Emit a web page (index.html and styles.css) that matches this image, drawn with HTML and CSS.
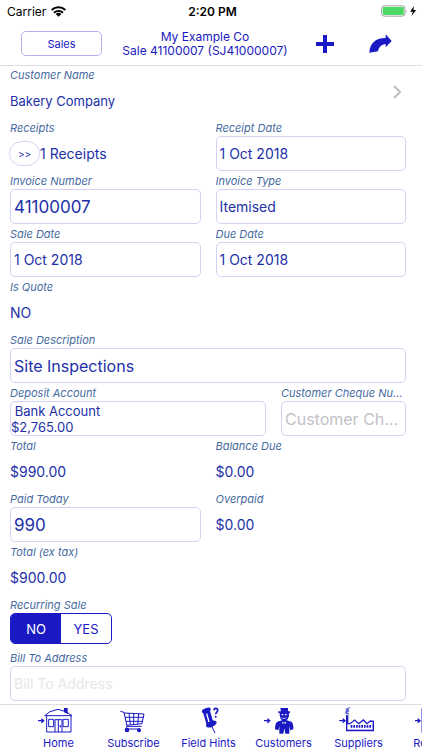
FILE: index.html
```html
<!DOCTYPE html>
<html lang="en">
<head>
<meta charset="utf-8">
<meta name="viewport" content="width=device-width, initial-scale=1">
<title>Sale 41100007</title>
<link rel="stylesheet" href="styles.css">
</head>
<body>
<div class="status">
  <div class="status-left">
    <span>Carrier</span>
    <svg class="wifi" viewBox="0 0 45 33" aria-hidden="true">
      <path d="M2 12a30 30 0 0 1 41 0M9 20a20 20 0 0 1 27 0" fill="none" stroke="#000" stroke-width="6"/>
      <path d="M14 24a13 13 0 0 1 17 0l-8.500 8z"/>
    </svg>
  </div>
  <span class="time">2:20 PM</span>
  <div class="status-right">
    <svg class="battery" viewBox="0 0 110 36" aria-hidden="true">
      <rect x="1.500" y="2.500" width="70" height="31" rx="8" fill="#fff" stroke="#8b8b8b" stroke-width="2.500"/>
      <rect x="5" y="6" width="63" height="24" rx="4" fill="#4cd964"/>
      <path d="M74 13q4 5 0 10z" fill="#8b8b8b"/>
      <path d="M98 3L87 20h8l-4 13 14-18h-8z"/>
    </svg>
  </div>
</div>

<header class="header">
  <button class="back" type="button">Sales</button>
  <h1 class="title">My Example Co<br>Sale 41100007 (SJ41000007)</h1>
  <button class="icon-button" type="button" aria-label="Add">
    <svg class="plus" viewBox="0 0 18 18"><path d="M7 0h4v7h7v4h-7v7H7v-7H0V7h7z"/></svg>
  </button>
  <button class="icon-button" type="button" aria-label="Share">
    <svg class="share" viewBox="0 0 69 60"><path d="M1 56C2 28 21 11 50 12V1l18 20-18 19V30C38 31 29 39 27 52z"/></svg>
  </button>
</header>

<main class="form">
  <div class="row">
    <a class="customer" href="#customer">
      <span class="label">Customer Name</span>
      <span class="value name">Bakery Company</span>
      <svg class="chevron" viewBox="0 0 8 14" aria-hidden="true"><path d="M1 1l6 6-6 6"/></svg>
    </a>
  </div>
  <div class="row halves">
    <div class="field">
      <span class="label">Receipts</span>
      <div class="value receipts"><button class="pill" type="button" aria-label="Open receipts">&gt;&gt;</button><span>1 Receipts</span></div>
    </div>
    <div class="field">
      <label class="label" for="receipt-date">Receipt Date</label>
      <input class="box" id="receipt-date" type="text" value="1 Oct 2018">
    </div>
  </div>
  <div class="row halves">
    <div class="field">
      <label class="label" for="invoice-number">Invoice Number</label>
      <input class="box number" id="invoice-number" type="text" value="41100007">
    </div>
    <div class="field">
      <label class="label" for="invoice-type">Invoice Type</label>
      <input class="box" id="invoice-type" type="text" value="Itemised">
    </div>
  </div>
  <div class="row halves">
    <div class="field">
      <label class="label" for="sale-date">Sale Date</label>
      <input class="box" id="sale-date" type="text" value="1 Oct 2018">
    </div>
    <div class="field">
      <label class="label" for="due-date">Due Date</label>
      <input class="box" id="due-date" type="text" value="1 Oct 2018">
    </div>
  </div>
  <div class="row">
    <div class="field"><span class="label">Is Quote</span><span class="value">NO</span></div>
  </div>
  <div class="row">
    <div class="field">
      <label class="label" for="description">Sale Description</label>
      <input class="box words" id="description" type="text" value="Site Inspections">
    </div>
  </div>
  <div class="row deposit">
    <div class="field">
      <label class="label" for="account">Deposit Account</label>
      <button class="box name account" id="account" type="button"> Bank Account
$2,765.00</button>
    </div>
    <div class="field">
      <label class="label" for="cheque">Customer Cheque Number</label>
      <input class="box words" id="cheque" type="text" placeholder="Customer Cheque Number">
    </div>
  </div>
  <div class="row halves">
    <div class="field"><span class="label">Total</span><span class="value">$990.00</span></div>
    <div class="field"><span class="label">Balance Due</span><span class="value">$0.00</span></div>
  </div>
  <div class="row halves">
    <div class="field">
      <label class="label" for="paid">Paid Today</label>
      <input class="box number" id="paid" type="text" value="990">
    </div>
    <div class="field"><span class="label">Overpaid</span><span class="value">$0.00</span></div>
  </div>
  <div class="row">
    <div class="field"><span class="label">Total (ex tax)</span><span class="value">$900.00</span></div>
  </div>
  <div class="row">
    <fieldset class="field">
      <legend class="label">Recurring Sale</legend>
      <div class="segmented">
        <label class="segment"><input type="radio" name="recurring" checked><span>NO</span></label>
        <label class="segment"><input type="radio" name="recurring"><span>YES</span></label>
      </div>
    </fieldset>
  </div>
  <div class="row">
    <div class="field">
      <label class="label" for="address">Bill To Address</label>
      <input class="box address" id="address" type="text" placeholder="Bill To Address">
    </div>
  </div>
</main>

<nav class="tabs">
  <a class="tab" href="#home">
    <svg viewBox="0 0 225 84" aria-hidden="true"><g transform="translate(-63 -18)">
      <path d="M114 62h16M124 56l7 6-7 6" class="line arrow"/>
      <path d="M134 47l16-12 24-7 24 7 18 12zM140 47v49h73V47M165 96V59h21v37M175 59v37M146 58h15v22h-15zM189 58h16v22h-16z" class="line"/>
      <path d="M192 24h11v18l-11-5z"/><path d="M179 76h4v6h-4z"/>
    </g></svg>
    <span>Home</span>
  </a>
  <a class="tab" href="#subscribe">
    <svg viewBox="0 0 225 84" aria-hidden="true"><g transform="translate(-288 -18)">
      <path d="M361 34l11 3 9 42h44M372 39l60 3-6 29-46 5M375 52h55M378 64h50M387 39l4 36M401 40v34M416 41l-3 32M381 79l-3 8h42" class="line"/>
      <circle cx="381" cy="90" r="7"/><circle cx="417" cy="91" r="6"/>
    </g></svg>
    <span>Subscribe</span>
  </a>
  <a class="tab" href="#hints">
    <svg viewBox="0 0 225 84" aria-hidden="true"><g transform="translate(-3 -18)">
      <ellipse cx="109" cy="31" rx="14" ry="7" transform="rotate(-20 109 31)"/>
      <path d="M99 36l20-7 11 38-20 8z"/>
      <ellipse cx="124" cy="72" rx="17" ry="9" transform="rotate(-24 124 72)"/>
      <path d="M110 41l7 25" stroke="#fff" stroke-width="4" fill="none"/>
      <path d="M126 80l9 19" class="line"/>
      <path d="M132 31c0-8 11-8 11 0 0 6-6 6-6 12" fill="none" stroke="#1a19c4" stroke-width="5"/>
      <circle cx="137" cy="50" r="3"/>
    </g></svg>
    <span>Field Hints</span>
  </a>
  <a class="tab" href="#customers">
    <svg viewBox="0 0 225 84" aria-hidden="true"><g transform="translate(-228 -18)">
      <path d="M282 62h15M292 56l7 6-7 6" class="line arrow"/>
      <path d="M331 24h23v10h6v5h-3q1 14-7 22l14 4q7 5 6 23l-9 3-3-12v22h-12l-3-16-3 16h-12V79l-3 12-10-3q0-18 7-23l14-4q-8-8-7-22h-4v-5h8z"/>
      <path d="M335 53q7 6 14 0" stroke="#fff" stroke-width="2" fill="none"/>
      <path d="M335 42h5v4h-5zM345 42h5v4h-5zM337 65l5 3 6-3-1 7-5-3-5 3z" fill="#fff"/>
    </g></svg>
    <span>Customers</span>
  </a>
  <a class="tab" href="#suppliers">
    <svg viewBox="0 0 225 84" aria-hidden="true"><g transform="translate(-63 -18)">
      <path d="M118 62h16M128 56l7 6-7 6" class="line arrow"/>
      <path d="M140 47v45h80V64l-9-1-10 8-11-11-14 11-12-11-14 11-7-1V48z" class="line thick"/>
      <path d="M152 79h65" stroke="#1a19c4" stroke-width="8" stroke-dasharray="5 3"/>
      <path d="M140 91h81" class="line thick"/>
      <path d="M137 28l9-3-7 9 8-2-9 7 9 3" fill="none" stroke="#6463d4" stroke-width="4"/>
    </g></svg>
    <span>Suppliers</span>
  </a>
  <a class="tab" href="#reports">
    <svg viewBox="0 0 225 84" aria-hidden="true"><g transform="translate(-288 -18)">
      <path d="M345 62h13M353 56l7 6-7 6" class="line arrow"/>
      <path d="M365 25h54v72h-54zM375 43h34M375 58h34M375 73h34" class="line pale"/>
    </g></svg>
    <span>Reports</span>
  </a>
</nav>
</body>
</html>
```

FILE: styles.css
```css
:root {
  --blue: #1a19c4;
  --text: #2230a8;
  --label: #466a9f;
  --line: #d5d1f2;
}

* {
  box-sizing: border-box;
}

body {
  margin: 0;
  height: 100vh;
  display: flex;
  flex-direction: column;
  overflow: hidden;
  background: #fff;
  color: var(--text);
  font-family: Inter, "Liberation Sans", sans-serif;
  font-size: 14px;
}

button,
input {
  font: inherit;
  color: inherit;
  margin: 0;
}

button {
  background: none;
  border: 0;
  padding: 0;
}

a {
  color: inherit;
  text-decoration: none;
}

.status {
  flex: none;
  display: grid;
  grid-template-columns: 1fr auto 1fr;
  align-items: center;
  height: 22px;
  padding: 0 4px 0 7px;
  color: #000;
  font-size: 12px;
}

.status-left {
  display: flex;
  align-items: center;
  gap: 5px;
}

.wifi {
  width: 15px;
  height: 11px;
}

.time {
  font-weight: 600;
}

.status-right {
  display: flex;
  justify-content: flex-end;
}

.battery {
  width: 37px;
  height: 12px;
}

.header {
  flex: none;
  display: grid;
  grid-template-columns: 81px 1fr 50px 60px;
  align-items: center;
  height: 44px;
  padding: 0 12px 0 21px;
  border-bottom: 1px solid #dedee2;
  color: var(--blue);
}

.back {
  height: 25px;
  border: 1px solid #b5b1ea;
  border-radius: 5px;
  font-size: 11px;
}

.title {
  margin: 0;
  padding-left: 8px;
  font-size: 12px;
  font-weight: 400;
  line-height: 14px;
  text-align: center;
  white-space: nowrap;
}

.icon-button {
  display: flex;
  align-items: center;
  justify-content: center;
  height: 40px;
}

.icon-button svg {
  fill: var(--blue);
}

.plus {
  width: 18px;
  height: 18px;
}

.share {
  width: 23px;
  height: 20px;
}

.form {
  flex: 1;
  min-height: 0;
  overflow: hidden auto;
  scrollbar-width: none;
  padding: 0 16px 0 10px;
}

.row {
  display: grid;
  gap: 15px;
  padding-bottom: 1px;
}

.halves {
  grid-template-columns: 1fr 1fr;
}

.deposit {
  grid-template-columns: 1fr 125px;
}

.field {
  min-width: 0;
  margin: 0;
  padding: 0;
  border: 0;
}

.label {
  display: block;
  padding: 1px 0 0;
  color: var(--label);
  font-size: 11px;
  font-style: italic;
  line-height: 16px;
  white-space: nowrap;
  overflow: hidden;
  text-overflow: ellipsis;
}

.value {
  display: flex;
  align-items: center;
  height: 35px;
}

.name {
  font-size: 13px;
}

.customer {
  display: grid;
  grid-template-columns: 1fr auto;
  align-items: center;
}

.customer .label,
.customer .value {
  grid-column: 1;
}

.chevron {
  grid-column: 2;
  grid-row: 1 / 3;
  width: 8px;
  height: 14px;
  margin-right: 5px;
  fill: none;
  stroke: #bdbdc2;
  stroke-width: 2;
}

.pill {
  width: 31px;
  height: 25px;
  margin-left: -1px;
  border: 1px solid var(--line);
  border-radius: 13px;
  font-size: 10px;
}

.box {
  display: block;
  width: 100%;
  height: 35px;
  padding: 0 3px;
  border: 1px solid var(--line);
  border-radius: 5px;
  background: #fff;
  text-overflow: ellipsis;
}

.number {
  font-size: 17px;
}

.words {
  font-size: 16px;
}

.box::placeholder {
  color: #c2c2c7;
  opacity: 1;
}

.address::placeholder {
  color: #e6e6ea;
}

.account {
  padding: 0;
  line-height: 16px;
  text-align: left;
  white-space: pre;
}

.segmented {
  display: flex;
  width: 102px;
  height: 31px;
  margin-bottom: 4px;
  border: 1px solid var(--blue);
  border-radius: 5px;
  overflow: hidden;
}

.segment {
  flex: 1;
  display: grid;
  color: var(--blue);
  font-size: 13px;
}

.segment input {
  grid-area: 1 / 1;
  width: 100%;
  height: 100%;
  appearance: none;
}

.segment input:checked {
  background: var(--blue);
}

.segment span {
  grid-area: 1 / 1;
  z-index: 1;
  place-self: center;
}

.segment input:checked + span {
  color: #fff;
}

.tabs {
  flex: none;
  display: flex;
  height: 46px;
  padding: 1px 0 0 21px;
  border-top: 1px solid #dedee2;
  overflow: hidden;
  color: var(--blue);
}

.tab {
  flex: 0 0 75px;
  display: flex;
  flex-direction: column;
  align-items: center;
  gap: 2px;
  font-size: 11px;
  line-height: 14px;
}

.tab svg {
  width: 75px;
  height: 28px;
  fill: var(--blue);
}

.tab .line {
  fill: none;
  stroke: var(--blue);
  stroke-width: 3;
}

.tab .arrow,
.tab .thick {
  stroke-width: 4;
}

.tab .pale {
  stroke: #8584df;
}
```
